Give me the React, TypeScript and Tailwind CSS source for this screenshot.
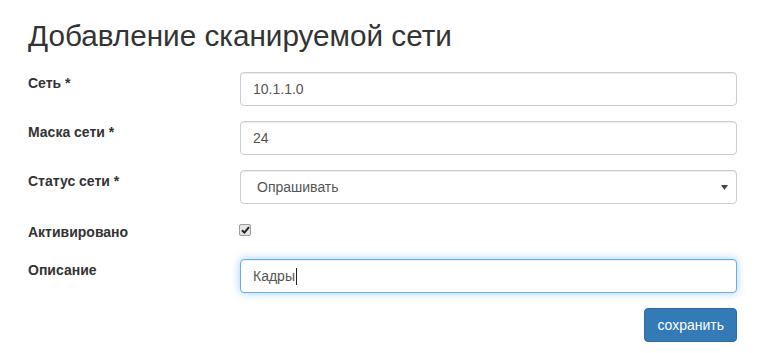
import React from "react";

const font = { fontFamily: '"Liberation Sans", Arial, sans-serif' };

function Row({ label, children, mt }: { label: string; children: React.ReactNode; mt: string }) {
  return (
    <div className={`flex ${mt}`}>
      <div className="w-[212px] shrink-0 text-[14px] leading-[20px] font-bold text-[#333] pt-[1px]">{label}</div>
      <div className="w-[497px]">{children}</div>
    </div>
  );
}

const inputCls =
  "w-full h-[34px] px-[12px] border border-[#ccc] rounded-[4px] bg-white text-[14px] text-[#555] flex items-center shadow-[inset_0_1px_1px_rgba(0,0,0,0.075)]";

export default function App() {
  return (
    <div className="w-[775px] h-[353px] bg-white text-[#333] pl-[28px]" style={font}>
      <h2 className="text-[29.7px] leading-[33px] font-normal pt-[19px] text-[#333]">Добавление сканируемой сети</h2>
      <Row label="Сеть *" mt="mt-[20px]">
        <div className={inputCls}>10.1.1.0</div>
      </Row>
      <Row label="Маска сети *" mt="mt-[15px]">
        <div className={inputCls}>24</div>
      </Row>
      <Row label="Статус сети *" mt="mt-[15px]">
        <div className={`${inputCls} justify-between pl-[16px] pr-[8px]`}>
          <span>Опрашивать</span>
          <svg width="7" height="5" viewBox="0 0 7 5" className="mt-[1px]">
            <path d="M0 0 H7 L3.5 5 Z" fill="#444" />
          </svg>
        </div>
      </Row>
      <Row label="Активировано" mt="mt-[17px]">
        <div className="pt-[3px]">
          <div className="w-[12px] h-[12px] -ml-[1px] border border-[#9a9a9a] rounded-[2px] bg-[#e6e6e6] flex items-center justify-center">
            <svg width="9" height="8" viewBox="0 0 9 8">
              <path d="M1 4.2 L3.4 6.6 L8 1.2" stroke="#222" strokeWidth="2" fill="none" />
            </svg>
          </div>
        </div>
      </Row>
      <Row label="Описание" mt="mt-[17px]">
        <div className="w-full h-[34px] px-[12px] border border-[#66afe9] rounded-[4px] bg-white text-[14px] text-[#555] flex items-center shadow-[inset_0_1px_1px_rgba(0,0,0,0.075),0_0_8px_rgba(102,175,233,0.6)]">
          Кадры<span className="inline-block w-[1px] h-[17px] bg-[#222] ml-[1px]" />
        </div>
      </Row>
      <div className="flex w-[709px] justify-end mt-[15px]">
        <button className="h-[34px] px-[12px] rounded-[4px] bg-[#337ab7] border border-[#2e6da4] text-white text-[14px]">
          сохранить
        </button>
      </div>
    </div>
  );
}
